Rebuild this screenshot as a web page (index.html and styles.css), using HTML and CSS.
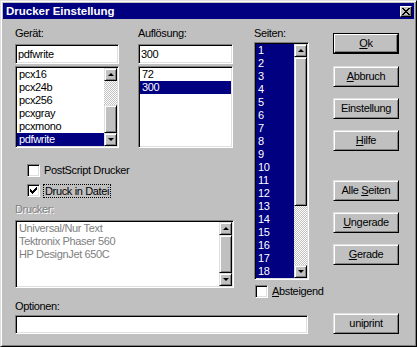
FILE: index.html
```html
<!DOCTYPE html>
<html lang="de">
<head>
    <meta charset="UTF-8">
    <title>Drucker Einstellung</title>
    <link rel="stylesheet" href="styles.css">
</head>
<body>
    <div class="dialog">
        <div class="titlebar">
            <span class="title">Drucker Einstellung</span>
            <span class="close">
                <svg width="8" height="7" viewBox="0 0 8 7" shape-rendering="crispEdges">
                    <path d="M0 0h2v1h1v1h2v-1h1v-1h2v1h-1v1h-1v1h-1v1h1v1h1v1h1v1h-2v-1h-1v-1h-2v1h-1v1h-2v-1h1v-1h1v-1h1v-1h-1v-1h-1v-1h-1z" fill="#000"/>
                </svg>
            </span>
        </div>
        <div class="content">
            <div class="main">
                <div class="upper">
                    <div class="leftpane">
                        <div class="fields">
                            <div class="field field-geraet">
                                <div class="label">Gerät:</div>
                                <div class="edit">pdfwrite</div>
                                <div class="listbox list-geraet">
                                    <div class="items">
                                        <div class="item">pcx16</div>
                                        <div class="item">pcx24b</div>
                                        <div class="item">pcx256</div>
                                        <div class="item">pcxgray</div>
                                        <div class="item">pcxmono</div>
                                        <div class="item sel">pdfwrite</div>
                                    </div>
                                    <div class="vscroll">
                                        <div class="sbtn"><span class="arrow up"></span></div>
                                        <div class="track track-geraet"></div>
                                        <div class="thumb thumb-geraet"></div>
                                        <div class="sbtn"><span class="arrow down"></span></div>
                                    </div>
                                </div>
                            </div>
                            <div class="field field-aufl">
                                <div class="label">Auflösung:</div>
                                <div class="edit">300</div>
                                <div class="listbox list-aufl">
                                    <div class="items">
                                        <div class="item">72</div>
                                        <div class="item sel">300</div>
                                    </div>
                                </div>
                            </div>
                        </div>

                        <div class="check check-ps">
                            <span class="box"></span>
                            <span>PostScript Drucker</span>
                        </div>
                        <div class="check check-file">
                            <span class="box">
                                <svg width="7" height="7" viewBox="0 0 7 7" shape-rendering="crispEdges">
                                    <path d="M6 0h1v3h-1v1h-1v1h-1v1h-1v1h-1v-1h-1v-1h-1v-3h1v1h1v1h1v-1h1v-1h1v-1h1z" fill="#000"/>
                                </svg>
                            </span>
                            <span class="focus">Druck in Datei</span>
                        </div>

                        <div class="label label-drucker disabled">Drucker:</div>
                        <div class="listbox list-drucker">
                            <div class="items dim">
                                <div class="item">Universal/Nur Text</div>
                                <div class="item">Tektronix Phaser 560</div>
                                <div class="item">HP DesignJet 650C</div>
                            </div>
                            <div class="vscroll">
                                <div class="sbtn"><span class="arrow up"></span></div>
                                <div class="thumb thumb-drucker"></div>
                                <div class="sbtn"><span class="arrow down"></span></div>
                            </div>
                        </div>
                    </div>

                    <div class="seiten">
                        <div class="label">Seiten:</div>
                        <div class="listbox list-seiten">
                            <div class="items selall">
                                <div class="item">1</div>
                                <div class="item">2</div>
                                <div class="item">3</div>
                                <div class="item">4</div>
                                <div class="item">5</div>
                                <div class="item">6</div>
                                <div class="item">7</div>
                                <div class="item">8</div>
                                <div class="item">9</div>
                                <div class="item">10</div>
                                <div class="item">11</div>
                                <div class="item">12</div>
                                <div class="item">13</div>
                                <div class="item">14</div>
                                <div class="item">15</div>
                                <div class="item">16</div>
                                <div class="item">17</div>
                                <div class="item">18</div>
                            </div>
                            <div class="vscroll">
                                <div class="sbtn"><span class="arrow up"></span></div>
                                <div class="thumb thumb-seiten"></div>
                                <div class="track track-seiten"></div>
                                <div class="sbtn"><span class="arrow down"></span></div>
                            </div>
                        </div>
                        <div class="check check-desc">
                            <span class="box"></span>
                            <span><u>A</u>bsteigend</span>
                        </div>
                    </div>
                </div>

                <div class="label label-opt">Optionen:</div>
                <div class="edit edit-opt"></div>
            </div>

            <div class="buttons">
                <div class="btn default btn-ok"><span class="face"><u>O</u>k</span></div>
                <div class="btn btn-abbruch"><u>A</u>bbruch</div>
                <div class="btn btn-einst">Einstellung</div>
                <div class="btn btn-hilfe"><u>H</u>ilfe</div>
                <div class="btn btn-alle">Alle <u>S</u>eiten</div>
                <div class="btn btn-ungerade"><u>U</u>ngerade</div>
                <div class="btn btn-gerade"><u>G</u>erade</div>
                <div class="btn btn-uni">uniprint</div>
            </div>
        </div>
    </div>
</body>
</html>
```

FILE: styles.css
```css
* {
    margin: 0;
    padding: 0;
    box-sizing: border-box;
}
body {
    font-family: "Liberation Sans", Arial, sans-serif;
    font-size: 11px;
    letter-spacing: -0.35px;
    color: #000;
    background: #c0c0c0;
    width: 417px;
    height: 347px;
    overflow: hidden;
}
u {
    text-decoration: underline;
    text-underline-offset: 1px;
}

/* window frame */
.dialog {
    width: 417px;
    height: 347px;
    background: #c0c0c0;
    border: 1px solid;
    border-color: #dfdfdf #000 #000 #dfdfdf;
    box-shadow: inset 1px 1px #fff, inset -1px -1px #808080;
    padding: 2px;
    display: flex;
    flex-direction: column;
}
.titlebar {
    height: 16px;
    background: #000080;
    color: #fff;
    display: flex;
    align-items: center;
    justify-content: space-between;
    padding: 0 2px 0 3px;
}
.title {
    font-weight: bold;
    font-size: 11.5px;
    letter-spacing: 0;
}
.close {
    width: 12px;
    height: 11px;
    background: #c0c0c0;
    border: 1px solid;
    border-color: #fff #000 #000 #fff;
    box-shadow: inset -1px -1px #808080;
    display: flex;
    align-items: center;
    justify-content: center;
}

/* body */
.content {
    display: flex;
    padding: 8px 0 0 12px;
}
.main {
    width: 294px;
}
.upper {
    display: flex;
    height: 273px;
}
.leftpane {
    width: 219px;
}
.fields {
    display: flex;
    gap: 19px;
}
.field-geraet { width: 104px; }
.field-aufl { width: 95px; }
.seiten {
    margin-left: 20px;
    width: 55px;
}

.label {
    height: 13px;
    line-height: 13px;
}
.disabled {
    color: #808080;
    text-shadow: 1px 1px #fff;
}

/* sunken fields */
.edit,
.listbox,
.box {
    background: #fff;
    border: 1px solid;
    border-color: #808080 #fff #fff #808080;
    box-shadow: inset 1px 1px #000, inset -1px -1px #dfdfdf;
    padding: 1px;
}
.edit {
    margin-top: 4px;
    height: 20px;
    line-height: 16px;
    padding: 1px 2px;
}
.listbox {
    margin-top: 2px;
    display: flex;
    overflow: hidden;
}
.items {
    flex: 1;
}
.item {
    height: 13px;
    line-height: 13px;
    padding-left: 2px;
    white-space: nowrap;
}
.item.sel,
.selall {
    background: #000080;
    color: #fff;
}
.dim { color: #808080; }

.list-geraet { height: 82px; }
.list-aufl { height: 82px; }
.list-seiten { height: 238px; }
.list-drucker {
    height: 68px;
    margin-top: 4px;
}

/* scrollbars */
.vscroll {
    width: 13px;
    display: flex;
    flex-direction: column;
}
.sbtn,
.thumb,
.btn {
    background: #c0c0c0;
    border: 1px solid;
    border-color: #dfdfdf #000 #000 #dfdfdf;
    box-shadow: inset 1px 1px #fff, inset -1px -1px #808080;
}
.sbtn {
    height: 13px;
    display: flex;
    align-items: center;
    justify-content: center;
}
.arrow {
    width: 0;
    height: 0;
    border-left: 3px solid transparent;
    border-right: 3px solid transparent;
}
.arrow.up { border-bottom: 3px solid #000; }
.arrow.down { border-top: 3px solid #000; }
.track {
    background: repeating-conic-gradient(#c0c0c0 0 25%, #fff 0 50%) 0 0 / 2px 2px;
}
.track-geraet { height: 24px; }
.thumb-geraet { height: 28px; }
.thumb-seiten { height: 149px; }
.track-seiten { height: 59px; }
.thumb-drucker { height: 38px; }

/* check boxes */
.check {
    display: flex;
    align-items: center;
    gap: 4px;
    height: 13px;
    line-height: 13px;
    white-space: nowrap;
}
.box {
    flex-shrink: 0;
    width: 13px;
    height: 13px;
    display: flex;
    align-items: center;
    justify-content: center;
}
.check-ps {
    margin: 16px 0 0 12px;
}
.check-file {
    margin: 7px 0 0 12px;
}
.focus {
    outline: 1px dotted #000;
    outline-offset: 0;
    padding: 0 1px;
    line-height: 12px;
}
.label-drucker {
    margin-top: 6px;
}
.check-desc {
    margin-top: 5px;
    margin-left: 1px;
}

.label-opt {
    margin-top: 0;
}
.edit-opt {
    margin-top: 2px;
    width: 293px;
    height: 19px;
}

/* buttons */
.buttons {
    margin-left: 24px;
    width: 66px;
    display: flex;
    flex-direction: column;
}
.btn {
    height: 21px;
    line-height: 19px;
    text-align: center;
}
.btn.default {
    border: 1px solid #000;
    box-shadow: none;
    padding: 0;
}
.btn.default .face {
    display: block;
    height: 19px;
    line-height: 17px;
    border: 1px solid;
    border-color: #fff #000 #000 #fff;
    box-shadow: inset -1px -1px #808080;
}
.btn-ok { margin-top: 6px; }
.btn-abbruch { margin-top: 12px; }
.btn-einst { margin-top: 11px; }
.btn-hilfe { margin-top: 11px; }
.btn-alle { margin-top: 29px; }
.btn-ungerade { margin-top: 11px; }
.btn-gerade { margin-top: 11px; }
.btn-uni { margin-top: 48px; }
```
